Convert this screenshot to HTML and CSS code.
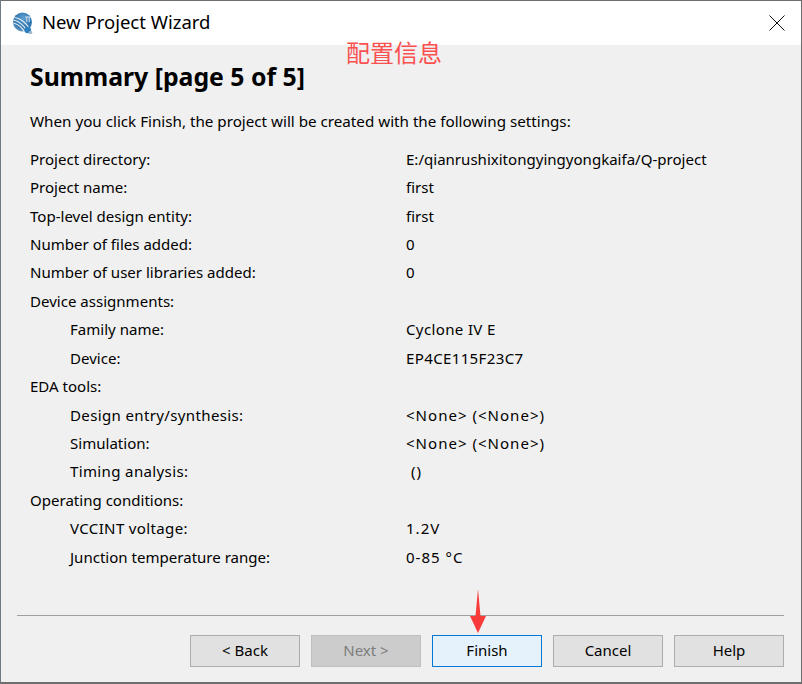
FILE: index.html
```html
<!DOCTYPE html>
<html lang="en">
<head>
<meta charset="utf-8">
<title>New Project Wizard</title>
<link rel="stylesheet" href="styles.css">
</head>
<body>
<div class="window">
  <header class="titlebar">
    <svg class="app-icon" width="24" height="24" viewBox="0 0 24 24">
      <defs>
        <radialGradient id="globe" cx="0.55" cy="0.3" r="0.8">
          <stop offset="0" stop-color="#5f9fd0"/>
          <stop offset="0.6" stop-color="#2f74ad"/>
          <stop offset="1" stop-color="#7fa9c8"/>
        </radialGradient>
      </defs>
      <circle cx="11.5" cy="11" r="9.5" fill="url(#globe)"/>
      <path d="M2.5 9C7 10 13 14 16 20M2.5 12C6 13 11 16 13.5 21M3.5 6.5C8 7 15 11 18.500 18" fill="none" stroke="#e4eef6" stroke-width="1.200"/>
      <path d="M14 6h6M15.800 6v5M18.200 6v5" fill="none" stroke="#cfe2f0" stroke-width="1"/>
      <circle cx="16.800" cy="19" r="3.300" fill="#2c80bd"/>
      <circle cx="19.500" cy="21.500" r="1.800" fill="#9db8cc"/>
    </svg>
    <span class="title">New Project Wizard</span>
    <svg class="close" width="16" height="16" viewBox="0 0 16 16">
      <path d="M.5.5l15 15M15.500.5l-15 15" fill="none" stroke="#111" stroke-width="1"/>
    </svg>
  </header>
  <main class="content">
    <h1 class="heading">Summary [page 5 of 5]</h1>
    <p class="intro">When you click Finish, the project will be created with the following settings:</p>
    <dl class="settings">
      <dt>Project directory:</dt><dd>E:/qianrushixitongyingyongkaifa/Q-project</dd>
      <dt>Project name:</dt><dd>first</dd>
      <dt>Top-level design entity:</dt><dd>first</dd>
      <dt>Number of files added:</dt><dd>0</dd>
      <dt>Number of user libraries added:</dt><dd>0</dd>
      <dt>Device assignments:</dt><dd></dd>
      <dt class="sub">Family name:</dt><dd class="track-s">Cyclone IV E</dd>
      <dt class="sub">Device:</dt><dd class="track-s">EP4CE115F23C7</dd>
      <dt>EDA tools:</dt><dd></dd>
      <dt class="sub track-s">Design entry/synthesis:</dt><dd class="track-l">&lt;None&gt; (&lt;None&gt;)</dd>
      <dt class="sub">Simulation:</dt><dd class="track-l">&lt;None&gt; (&lt;None&gt;)</dd>
      <dt class="sub track-s">Timing analysis:</dt><dd class="track-l">&nbsp;()</dd>
      <dt>Operating conditions:</dt><dd></dd>
      <dt class="sub track-s">VCCINT voltage:</dt><dd class="track-l">1.2V</dd>
      <dt class="sub">Junction temperature range:</dt><dd class="track-l">0-85 °C</dd>
    </dl>
  </main>
  <footer class="footer">
    <div class="buttons">
      <button class="btn">&lt; Back</button>
      <button class="btn disabled">Next &gt;</button>
      <button class="btn primary">Finish</button>
      <button class="btn">Cancel</button>
      <button class="btn">Help</button>
    </div>
  </footer>
  <div class="note">配置信息</div>
  <svg class="arrow" width="18" height="44" viewBox="0 0 18 44">
    <path d="M9 0L11.500 27H17L9 44L1 27H6.500Z" fill="#f93a3a"/>
  </svg>
</div>
</body>
</html>
```
FILE: styles.css
```css
* { box-sizing: border-box; }
html, body { margin: 0; padding: 0; }
body {
  width: 802px;
  height: 684px;
  overflow: hidden;
  font-family: "Noto Sans", "Open Sans", sans-serif;
  color: #000;
  background: #fff;
}
.window {
  position: relative;
  width: 802px;
  height: 684px;
  display: flex;
  flex-direction: column;
  background: #f0f0f0;
  border-top: 1px solid #6e6e6e;
  border-left: 1px solid #6e7a85;
  border-right: 1px solid #6e6e6e;
  border-bottom: 2px solid #6e6e6e;
}
.titlebar {
  flex: none;
  height: 44px;
  display: flex;
  align-items: center;
  padding: 0 16px 1px 11px;
  background: #fff;
}
.app-icon { flex: none; margin-left: -1px; }
.title {
  margin: -2px 0 0 7px;
  font-size: 18.5px;
  color: #000;
}
.close { margin-left: auto; }
.content {
  flex: 1;
  min-height: 0;
  padding: 14px 0 0 29px;
}
.heading {
  margin: 0;
  font-size: 24.8px;
  line-height: 34px;
  font-weight: 700;
}
.intro {
  margin: 16px 0 0;
  font-size: 15.2px;
  line-height: 24px;
}
.settings {
  margin: 11.5px 0 0;
  display: grid;
  grid-template-columns: 376px 1fr;
  grid-auto-rows: 28.43px;
  align-items: center;
  font-size: 15.05px;
  line-height: 20px;
}
.settings dt { margin: 0; }
.settings dt.sub { padding-left: 40px; }
.settings dd { margin: 0; }
.track-s { letter-spacing: 0.35px; }
.track-l { letter-spacing: 1px; }
.footer {
  flex: none;
  margin: 0 17px 0 16px;
  height: 67px;
  padding-top: 19px;
  border-top: 1px solid #a0a0a0;
}
.buttons {
  display: flex;
  justify-content: flex-end;
  gap: 11px;
}
.btn {
  width: 110px;
  height: 32px;
  padding: 0 0 3px;
  font: inherit;
  font-size: 15px;
  color: #000;
  background: #e1e1e1;
  border: 1px solid #adadad;
}
.btn.disabled {
  color: #7d7d7d;
  background: #cccccc;
  border-color: #bfbfbf;
}
.btn.primary {
  background: #e5f1fb;
  border-color: #0078d7;
}
.note {
  position: absolute;
  left: 345px;
  top: 37px;
  font-family: "Noto Sans CJK SC", sans-serif;
  font-size: 24px;
  line-height: 28px;
  color: #fb5050;
}
.arrow {
  position: absolute;
  left: 468px;
  top: 588px;
}
```
